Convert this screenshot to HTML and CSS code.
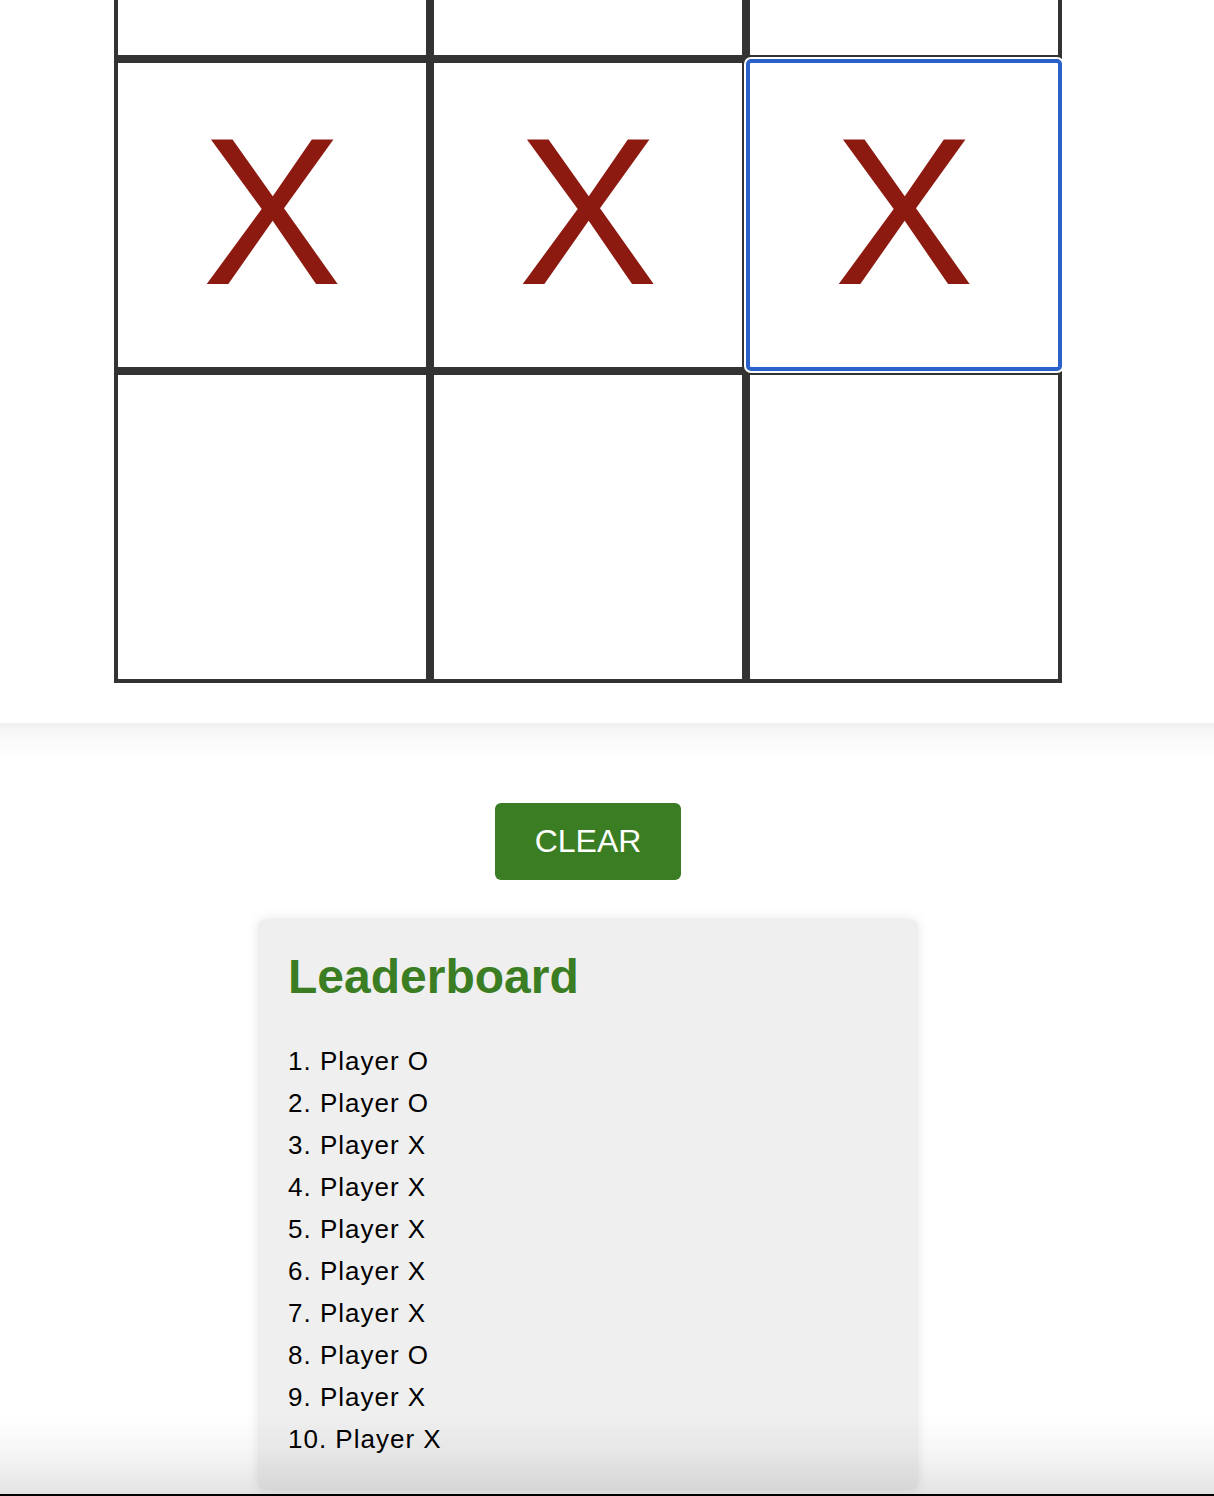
FILE: index.html
```html
<!DOCTYPE html>
<html lang="en">
<head>
<meta charset="utf-8">
<title>Tic Tac Toe</title>
<link rel="stylesheet" href="styles.css">
</head>
<body>
  <section class="board-section">
    <div class="container">
      <div class="board">
        <div class="cell"></div>
        <div class="cell"></div>
        <div class="cell"></div>
        <div class="cell">X</div>
        <div class="cell">X</div>
        <div class="cell cell-focused">X</div>
        <div class="cell"></div>
        <div class="cell"></div>
        <div class="cell"></div>
      </div>
    </div>
  </section>
  <section class="controls-section">
    <div class="container">
      <button class="clear-btn" type="button">CLEAR</button>
      <div class="leaderboard">
        <h2 class="leaderboard-title">Leaderboard</h2>
        <ul class="leaderboard-list">
          <li>1. Player O</li>
          <li>2. Player O</li>
          <li>3. Player X</li>
          <li>4. Player X</li>
          <li>5. Player X</li>
          <li>6. Player X</li>
          <li>7. Player X</li>
          <li>8. Player O</li>
          <li>9. Player X</li>
          <li>10. Player X</li>
        </ul>
      </div>
    </div>
  </section>
  <div class="window-edge"></div>
</body>
</html>
```
FILE: styles.css
```css
html, body {
  margin: 0;
  padding: 0;
  background: #ffffff;
  font-family: "Liberation Sans", Arial, Helvetica, sans-serif;
}

body {
  height: 1496px;
  overflow: hidden;
}

.container {
  width: 1176px;
  display: flex;
  flex-direction: column;
  align-items: center;
}

.board-section {
  padding-bottom: 40px;
  background: #ffffff;
}

.board {
  margin-top: -253px;
  display: grid;
  grid-template-columns: repeat(3, 316px);
  grid-template-rows: repeat(3, 312px);
}

.cell {
  box-sizing: border-box;
  border: 4px solid #333333;
  background: #ffffff;
  display: flex;
  align-items: center;
  justify-content: center;
  padding-bottom: 6px;
  font-family: "Liberation Sans", Arial, Helvetica, sans-serif;
  font-size: 210px;
  line-height: 1;
  color: #8c1a11;
}

.cell-focused {
  position: relative;
  z-index: 1;
  border-color: #2a62c9;
  border-radius: 5px;
  box-shadow: 0 0 0 2px #ffffff;
}

.controls-section {
  background: linear-gradient(to bottom, #f1f1f1 0, #fafafa 16px, #ffffff 38px);
  padding-top: 80px;
  padding-bottom: 40px;
}

.clear-btn {
  font-family: "Liberation Sans", Arial, Helvetica, sans-serif;
  font-size: 32px;
  line-height: normal;
  color: #ffffff;
  background: #3a7d23;
  border: none;
  border-radius: 6px;
  padding: 20px 40px;
  cursor: pointer;
}

.leaderboard {
  box-sizing: border-box;
  width: 660px;
  margin-top: 39px;
  padding: 30px;
  background: #efefef;
  border-radius: 8px;
  box-shadow: 0 0 12px rgba(0, 0, 0, 0.1);
}

.leaderboard-title {
  margin: 0 0 36px 0;
  font-size: 48px;
  font-weight: bold;
  line-height: normal;
  color: #3a7d23;
}

.leaderboard-list {
  list-style: none;
  margin: 0;
  padding: 0;
}

.leaderboard-list li {
  font-size: 26px;
  line-height: 42px;
  letter-spacing: 1px;
  color: #000000;
}

.window-edge {
  position: fixed;
  left: 0;
  right: 0;
  bottom: 0;
  height: 80px;
  pointer-events: none;
  background: linear-gradient(to bottom, rgba(0, 0, 0, 0) 0, rgba(0, 0, 0, 0.03) 45%, rgba(0, 0, 0, 0.11) 100%);
  border-bottom: 2px solid #000000;
}
```
